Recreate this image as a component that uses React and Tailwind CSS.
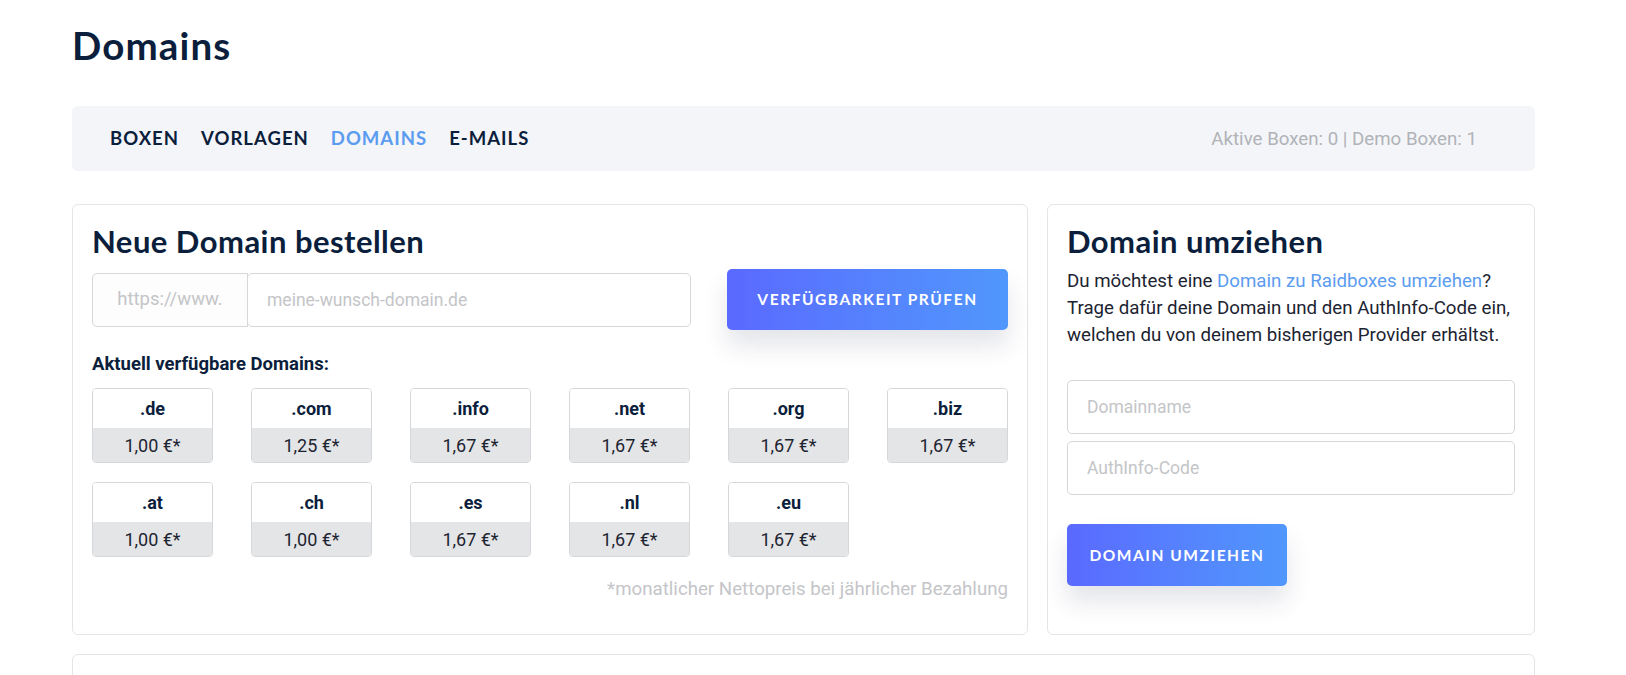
import React from "react";

const tlds = [
  [".de", "1,00 €*"],
  [".com", "1,25 €*"],
  [".info", "1,67 €*"],
  [".net", "1,67 €*"],
  [".org", "1,67 €*"],
  [".biz", "1,67 €*"],
  [".at", "1,00 €*"],
  [".ch", "1,00 €*"],
  [".es", "1,67 €*"],
  [".nl", "1,67 €*"],
  [".eu", "1,67 €*"],
];

const head = "font-['Lato',sans-serif]";
const body = "font-['Roboto',sans-serif]";

export default function App() {
  return (
    <div className={`min-h-[675px] bg-white ${body}`}>
      <div className="w-[1463px] ml-[72px] pt-[22px]">
        <h1 className={`${head} font-bold text-[38.5px] leading-[1.2] tracking-[0.03em] text-[#0b1e3b]`}>Domains</h1>

        <nav className="mt-[38px] h-[65px] rounded-[6px] bg-[#f4f5f8] flex items-center justify-between pl-[38px] pr-[58px]">
          <div className={`${head} flex items-center gap-[22px] font-bold text-[18.5px] tracking-[0.055em] text-[#0b1e3b]`}>
            <span>BOXEN</span>
            <span>VORLAGEN</span>
            <span className="text-[#5b9cf0]">DOMAINS</span>
            <span>E-MAILS</span>
          </div>
          <div className="text-[18.7px] text-[#b0b3b8]">Aktive Boxen: 0 | Demo Boxen: 1</div>
        </nav>

        <div className="mt-[33px] grid grid-cols-[956px_488px] gap-[19px]">
          {/* Left card */}
          <section className="rounded-[6px] border border-[#e3e5e8] px-[19px] pt-[18px] pb-[33px]">
            <h2 className={`${head} font-bold text-[31px] leading-[36px] tracking-[0.015em] text-[#0b1e3b]`}>Neue Domain bestellen</h2>
            <div className="mt-[10px] flex items-center justify-between h-[61px]">
              <div className="flex w-[599px] h-[54px]">
                <div className="w-[156px] shrink-0 flex items-center justify-center rounded-l-[5px] border border-[#d6d7da] bg-[#fdfdfd] text-[18.5px] text-[#c4c5c8]">
                  https://www.
                </div>
                <div className="-ml-px flex-1 flex items-center rounded-[5px] border border-[#d6d7da] bg-white pl-[19px] text-[17.5px] text-[#c4c5c8]">
                  meine-wunsch-domain.de
                </div>
              </div>
              <button className={`${head} w-[281px] h-[61px] rounded-[5px] bg-gradient-to-r from-[#5a69ff] to-[#5097fc] text-white font-bold text-[15.5px] tracking-[0.1em] shadow-[0_16px_24px_rgba(30,40,80,0.12)]`}>
                VERFÜGBARKEIT PRÜFEN
              </button>
            </div>

            <div className="mt-[22px] text-[18.5px] leading-[24px] font-bold text-[#0b1e3b]">Aktuell verfügbare Domains:</div>

            <div className="mt-[12px] grid grid-cols-[repeat(6,121px)] gap-x-[38px] gap-y-[19px]">
              {tlds.map(([t, p]) => (
                <div key={t} className="h-[75px] rounded-[4px] border border-[#d6d7da] overflow-hidden flex flex-col">
                  <div className="h-[39px] bg-white flex items-center justify-center text-[18px] font-bold text-[#0b1e3b]">{t}</div>
                  <div className="flex-1 bg-[#e4e5e7] flex items-center justify-center text-[18px] text-[#1d2431]">{p}</div>
                </div>
              ))}
            </div>

            <div className="mt-[20px] text-right text-[18.7px] leading-[24px] text-[#c4c5c8]">
              *monatlicher Nettopreis bei jährlicher Bezahlung
            </div>
          </section>

          {/* Right card */}
          <section className="rounded-[6px] border border-[#e3e5e8] px-[19px] pt-[18px] pb-[48px]">
            <h2 className={`${head} font-bold text-[31px] leading-[36px] tracking-[0.015em] text-[#0b1e3b]`}>Domain umziehen</h2>
            <p className="mt-[9px] text-[18.7px] leading-[27px] text-[#1d2431]">
              Du möchtest eine <span className="text-[#5b9cf0]">Domain zu Raidboxes umziehen</span>? Trage dafür deine Domain und den AuthInfo-Code ein, welchen du von deinem bisherigen Provider erhältst.
            </p>
            <div className="mt-[31px] flex flex-col gap-[7px]">
              <div className="h-[54px] rounded-[5px] border border-[#d6d7da] flex items-center pl-[19px] text-[17.5px] text-[#c4c5c8]">Domainname</div>
              <div className="h-[54px] rounded-[5px] border border-[#d6d7da] flex items-center pl-[19px] text-[17.5px] text-[#c4c5c8]">AuthInfo-Code</div>
            </div>
            <button className={`${head} mt-[29px] w-[220px] h-[62px] rounded-[5px] bg-gradient-to-r from-[#5a69ff] to-[#5097fc] text-white font-bold text-[15.5px] tracking-[0.1em] shadow-[0_16px_24px_rgba(30,40,80,0.12)]`}>
              DOMAIN UMZIEHEN
            </button>
          </section>
        </div>

        <div className="mt-[19px] h-[100px] rounded-t-[6px] border border-[#e3e5e8]"></div>
      </div>
    </div>
  );
}
